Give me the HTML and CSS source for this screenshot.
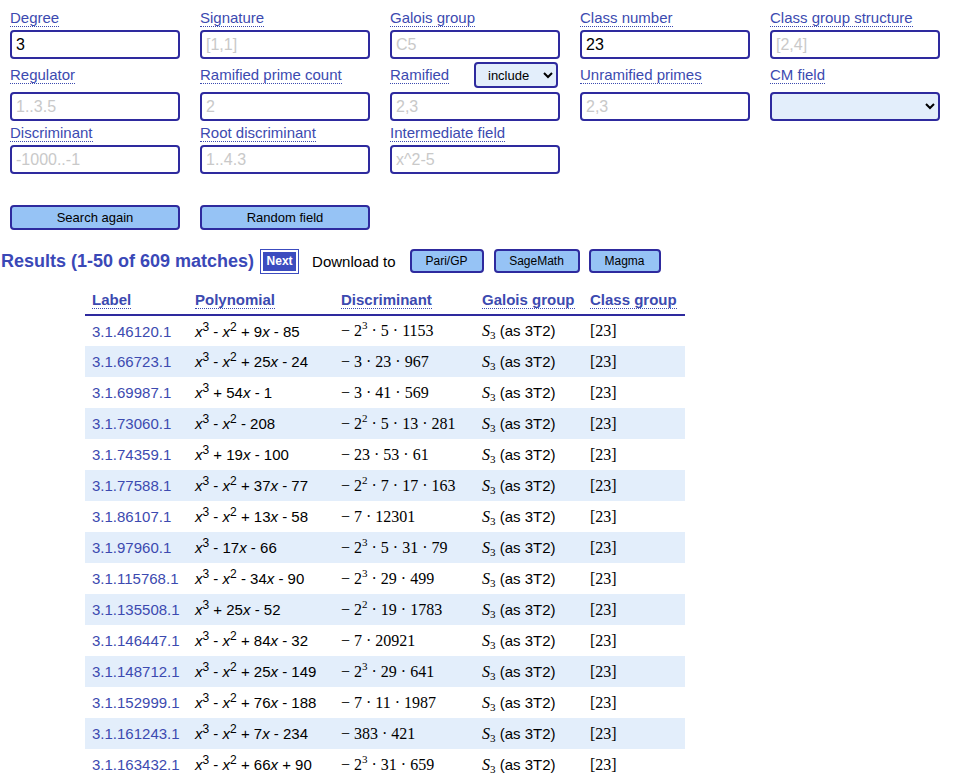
FILE: index.html
```html
<!DOCTYPE html>
<html>
<head>
<meta charset="utf-8">
<link rel="stylesheet" href="styles.css">
</head>
<body>
<form class="search">
  <div class="grid">
    <div class="lab"><span class="kn">Degree</span></div>
    <div class="lab"><span class="kn">Signature</span></div>
    <div class="lab"><span class="kn">Galois group</span></div>
    <div class="lab"><span class="kn">Class number</span></div>
    <div class="lab"><span class="kn">Class group structure</span></div>
    <input class="inp" value="3">
    <input class="inp" placeholder="[1,1]">
    <input class="inp" placeholder="C5">
    <input class="inp" value="23">
    <input class="inp" placeholder="[2,4]">

    <div class="lab tall"><span class="kn">Regulator</span></div>
    <div class="lab tall"><span class="kn">Ramified prime count</span></div>
    <div class="lab tall split"><span class="kn">Ramified</span><select class="sel-small"><option>include</option></select></div>
    <div class="lab tall"><span class="kn">Unramified primes</span></div>
    <div class="lab tall"><span class="kn">CM field</span></div>
    <input class="inp" placeholder="1..3.5">
    <input class="inp" placeholder="2">
    <input class="inp" placeholder="2,3">
    <input class="inp" placeholder="2,3">
    <select class="sel-wide"><option></option></select>

    <div class="lab"><span class="kn">Discriminant</span></div>
    <div class="lab"><span class="kn">Root discriminant</span></div>
    <div class="lab"><span class="kn">Intermediate field</span></div>
    <div></div>
    <div></div>
    <input class="inp" placeholder="-1000..-1">
    <input class="inp" placeholder="1..4.3">
    <input class="inp" placeholder="x^2-5">
  </div>
  <div class="btnrow">
    <button type="button" class="btn big">Search again</button>
    <button type="button" class="btn big">Random field</button>
  </div>
</form>

<div class="reshead">
  <h2 class="title">Results (1-50 of 609 matches)</h2>
  <span class="next">Next</span>
  <span class="dl">Download to</span>
  <button type="button" class="btn small w-pari">Pari/GP</button>
  <button type="button" class="btn small w-sage">SageMath</button>
  <button type="button" class="btn small w-magma">Magma</button>
</div>

<table class="res">
  <thead>
    <tr>
      <th class="c1"><span class="kn">Label</span></th>
      <th class="c2"><span class="kn">Polynomial</span></th>
      <th class="c3"><span class="kn">Discriminant</span></th>
      <th class="c4"><span class="kn">Galois group</span></th>
      <th class="c5"><span class="kn">Class group</span></th>
    </tr>
  </thead>
  <tbody>
    <tr><td><a>3.1.46120.1</a></td><td><i>x</i><sup>3</sup> - <i>x</i><sup>2</sup> + 9<i>x</i> - 85</td><td class="m">− 2<sup>3</sup> · 5 · 1153</td><td><span class="m"><i>S</i><sub>3</sub></span> (as 3T2)</td><td class="m">[23]</td></tr>
    <tr><td><a>3.1.66723.1</a></td><td><i>x</i><sup>3</sup> - <i>x</i><sup>2</sup> + 25<i>x</i> - 24</td><td class="m">− 3 · 23 · 967</td><td><span class="m"><i>S</i><sub>3</sub></span> (as 3T2)</td><td class="m">[23]</td></tr>
    <tr><td><a>3.1.69987.1</a></td><td><i>x</i><sup>3</sup> + 54<i>x</i> - 1</td><td class="m">− 3 · 41 · 569</td><td><span class="m"><i>S</i><sub>3</sub></span> (as 3T2)</td><td class="m">[23]</td></tr>
    <tr><td><a>3.1.73060.1</a></td><td><i>x</i><sup>3</sup> - <i>x</i><sup>2</sup> - 208</td><td class="m">− 2<sup>2</sup> · 5 · 13 · 281</td><td><span class="m"><i>S</i><sub>3</sub></span> (as 3T2)</td><td class="m">[23]</td></tr>
    <tr><td><a>3.1.74359.1</a></td><td><i>x</i><sup>3</sup> + 19<i>x</i> - 100</td><td class="m">− 23 · 53 · 61</td><td><span class="m"><i>S</i><sub>3</sub></span> (as 3T2)</td><td class="m">[23]</td></tr>
    <tr><td><a>3.1.77588.1</a></td><td><i>x</i><sup>3</sup> - <i>x</i><sup>2</sup> + 37<i>x</i> - 77</td><td class="m">− 2<sup>2</sup> · 7 · 17 · 163</td><td><span class="m"><i>S</i><sub>3</sub></span> (as 3T2)</td><td class="m">[23]</td></tr>
    <tr><td><a>3.1.86107.1</a></td><td><i>x</i><sup>3</sup> - <i>x</i><sup>2</sup> + 13<i>x</i> - 58</td><td class="m">− 7 · 12301</td><td><span class="m"><i>S</i><sub>3</sub></span> (as 3T2)</td><td class="m">[23]</td></tr>
    <tr><td><a>3.1.97960.1</a></td><td><i>x</i><sup>3</sup> - 17<i>x</i> - 66</td><td class="m">− 2<sup>3</sup> · 5 · 31 · 79</td><td><span class="m"><i>S</i><sub>3</sub></span> (as 3T2)</td><td class="m">[23]</td></tr>
    <tr><td><a>3.1.115768.1</a></td><td><i>x</i><sup>3</sup> - <i>x</i><sup>2</sup> - 34<i>x</i> - 90</td><td class="m">− 2<sup>3</sup> · 29 · 499</td><td><span class="m"><i>S</i><sub>3</sub></span> (as 3T2)</td><td class="m">[23]</td></tr>
    <tr><td><a>3.1.135508.1</a></td><td><i>x</i><sup>3</sup> + 25<i>x</i> - 52</td><td class="m">− 2<sup>2</sup> · 19 · 1783</td><td><span class="m"><i>S</i><sub>3</sub></span> (as 3T2)</td><td class="m">[23]</td></tr>
    <tr><td><a>3.1.146447.1</a></td><td><i>x</i><sup>3</sup> - <i>x</i><sup>2</sup> + 84<i>x</i> - 32</td><td class="m">− 7 · 20921</td><td><span class="m"><i>S</i><sub>3</sub></span> (as 3T2)</td><td class="m">[23]</td></tr>
    <tr><td><a>3.1.148712.1</a></td><td><i>x</i><sup>3</sup> - <i>x</i><sup>2</sup> + 25<i>x</i> - 149</td><td class="m">− 2<sup>3</sup> · 29 · 641</td><td><span class="m"><i>S</i><sub>3</sub></span> (as 3T2)</td><td class="m">[23]</td></tr>
    <tr><td><a>3.1.152999.1</a></td><td><i>x</i><sup>3</sup> - <i>x</i><sup>2</sup> + 76<i>x</i> - 188</td><td class="m">− 7 · 11 · 1987</td><td><span class="m"><i>S</i><sub>3</sub></span> (as 3T2)</td><td class="m">[23]</td></tr>
    <tr><td><a>3.1.161243.1</a></td><td><i>x</i><sup>3</sup> - <i>x</i><sup>2</sup> + 7<i>x</i> - 234</td><td class="m">− 383 · 421</td><td><span class="m"><i>S</i><sub>3</sub></span> (as 3T2)</td><td class="m">[23]</td></tr>
    <tr><td><a>3.1.163432.1</a></td><td><i>x</i><sup>3</sup> - <i>x</i><sup>2</sup> + 66<i>x</i> + 90</td><td class="m">− 2<sup>3</sup> · 31 · 659</td><td><span class="m"><i>S</i><sub>3</sub></span> (as 3T2)</td><td class="m">[23]</td></tr>
  </tbody>
</table>
</body>
</html>
```
FILE: styles.css
```css
* { box-sizing: border-box; }
body {
  margin: 0;
  font-family: "Liberation Sans", Arial, sans-serif;
  font-size: 15px;
  color: #000;
  background: #fff;
}
.search { padding: 7px 10px 0 10px; }
.grid {
  display: grid;
  grid-template-columns: repeat(5, 170px);
  grid-template-rows: 23px 32px 30px 30px 23px 29px;
  column-gap: 20px;
  row-gap: 0;
  align-items: start;
}
.lab {
  display: flex;
  align-items: center;
  height: 23px;
  color: #3c4ab0;
}
.lab.tall { height: 26px; }
.lab.split { justify-content: space-between; padding-right: 2px; }
.kn {
  border-bottom: 1px dotted #3c4ab0;
  line-height: 16px;
  color: #3c4ab0;
}
.inp {
  width: 170px;
  height: 29px;
  border: 2px solid #2e2a9e;
  border-radius: 4px;
  padding: 0 4px;
  font-family: "Liberation Sans", Arial, sans-serif;
  font-size: 16px;
  color: #000;
  background: #fff;
}
.inp::placeholder { color: #c9c9c9; }
.sel-small {
  width: 84px;
  height: 26px;
  border: 2px solid #2e2a9e;
  border-radius: 4px;
  background: #e3eefb;
  font-family: "Liberation Sans", Arial, sans-serif;
  font-size: 13px;
  color: #000;
  padding-left: 8px;
}
.sel-wide {
  width: 170px;
  height: 29px;
  border: 2px solid #2e2a9e;
  border-radius: 4px;
  background: #e3eefb;
  font-family: "Liberation Sans", Arial, sans-serif;
  font-size: 13px;
}
.btnrow {
  display: flex;
  gap: 20px;
  margin-top: 31px;
}
.btn {
  background: #96c3f5;
  border: 2px solid #2e2a9e;
  border-radius: 4px;
  font-family: "Liberation Sans", Arial, sans-serif;
  font-size: 13px;
  color: #000;
  padding: 0;
}
.btn.big { width: 170px; height: 25px; }
.btn.small { height: 24px; font-size: 12px; }
.w-pari { width: 74px; margin-left: 14px; }
.w-sage { width: 86px; margin-left: 10px; }
.w-magma { width: 72px; margin-left: 9px; }
.reshead {
  display: flex;
  align-items: center;
  margin-top: 19px;
  padding-left: 1px;
  height: 24px;
}
.title {
  margin: 0;
  font-size: 18px;
  font-weight: bold;
  color: #3a48b7;
}
.next {
  margin-left: 7px;
  width: 37px;
  height: 23px;
  background: #3c4cbf;
  color: #fff;
  font-weight: bold;
  font-size: 12px;
  display: flex;
  align-items: center;
  justify-content: center;
  border: 2px solid #fff;
  box-shadow: 0 0 0 1px #3c4cbf;
}
.dl { margin-left: 14px; font-size: 15px; }
.res {
  margin: 12px 0 0 85px;
  border-collapse: collapse;
  width: 600px;
  table-layout: fixed;
}
.res th {
  text-align: left;
  font-weight: bold;
  font-size: 15px;
  padding: 0 0 0 7px;
  height: 30px;
  vertical-align: middle;
  border-bottom: 2px solid #2e2a9e;
}
.res th .kn { color: #3c4ab0; border-bottom-color: #3c4ab0; }
.c1 { width: 103px; }
.c2 { width: 146px; }
.c3 { width: 141px; }
.c4 { width: 108px; }
.c5 { width: 102px; }
.res td {
  height: 31px;
  padding: 0 0 0 7px;
  vertical-align: middle;
  white-space: nowrap;
}
.res tbody tr:nth-child(even) td { background: #e3eefb; }
.res a { color: #3c4ab0; text-decoration: none; }
.res sup { font-size: 12px; line-height: 0; vertical-align: 6px; }
.m { font-family: "Liberation Serif", "Times New Roman", serif; font-size: 16px; }
.m sup { font-size: 11px; vertical-align: 7px; }
.m sub { font-size: 11px; line-height: 0; vertical-align: -3px; }
```
